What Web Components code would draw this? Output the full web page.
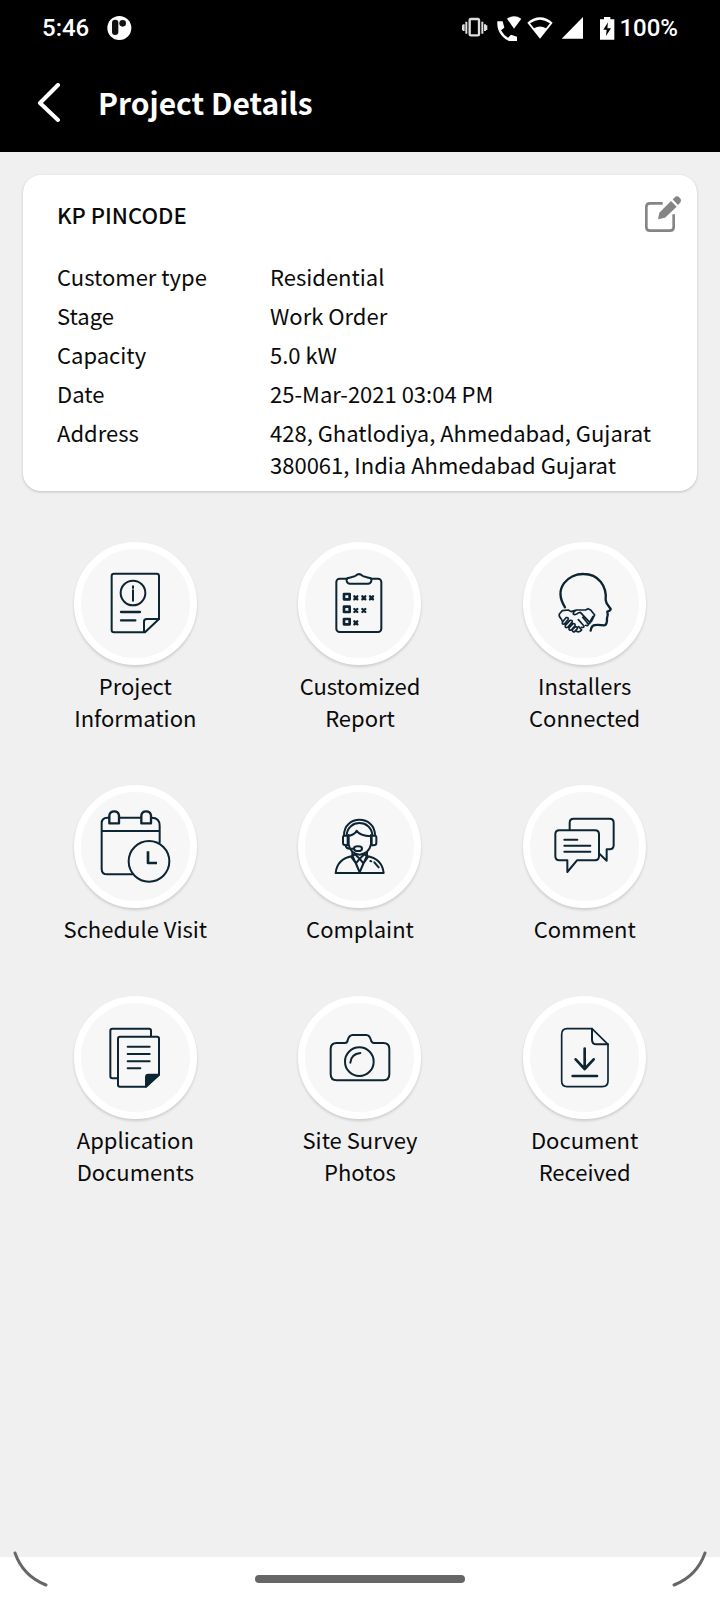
<!DOCTYPE html>
<html lang="en">
<head>
<meta charset="utf-8">
<meta name="viewport" content="width=device-width, initial-scale=1">
<title>Project Details</title>
<style>
    body {
        margin: 0;
        background: #f0f0f0;
        color: #0a0a0a;
        font: 22px/32px "Noto Sans CJK SC", "Noto Sans", sans-serif;
    }
</style>
</head>
<body>
<project-screen></project-screen>

<script>
class StatusBar extends HTMLElement {

    constructor() {
        super();
        this.attachShadow({mode: "open"})
    }

    connectedCallback() {
        this.shadowRoot.innerHTML = `
            <style>
                :host {
                    display: flex;
                    justify-content: space-between;
                    align-items: center;
                    height: 56px;
                    padding: 0 42px;
                    background: #000;
                    color: #fff;
                    font: 500 24px/28px Roboto, sans-serif;
                }
                div {
                    display: flex;
                    align-items: center;
                }
                .left {
                    gap: 18px;
                }
                .icons {
                    margin-right: 4px;
                }
                svg {
                    display: block;
                    fill: #fff;
                }
            </style>
            <div class="left">
                <span>${this.getAttribute("time")}</span>
                <svg width="25" height="26" viewBox="0 0 75 78">
                    <circle cx="37" cy="39" r="36"/>
                    <rect x="15" y="14" width="19" height="46" rx="9" fill="#111"/>
                    <circle cx="47" cy="25" r="10" fill="#111"/>
                </svg>
            </div>
            <div>
                <svg class="icons" width="153" height="26" viewBox="0 0 459 78">
                    <g fill="none" stroke="#ddd" stroke-width="7">
                        <rect x="23" y="12" width="28" height="49" rx="4"/>
                        <path d="M13 20v36M5 28v20M61 20v36M69 28v20" stroke-width="6"/>
                        <path d="M1 31v14M74 31v14" stroke-width="4"/>
                    </g>
                    <path d="M106 19h16l5 19-10 8q8 15 21 22l9-9 18 6v16q-28 2-45-18-16-18-14-44z"/>
                    <path d="M135 11q21-14 43 0l-22 30z"/>
                    <path d="M196 23q38-32 76 0l-38 48z"/>
                    <path d="M204 25q30-21 60 0l-12 15q-18-11-36 0z" fill="#000"/>
                    <path d="M299 71h64V6z"/>
                    <path d="M414 13h12V6h19v7h12v61h-43z"/>
                    <path d="M438 22l-14 22h10l-2 19 15-23h-11z" fill="#000"/>
                </svg>
                <span>${this.getAttribute("battery")}</span>
            </div>`
    }
}

class AppBar extends HTMLElement {

    constructor() {
        super();
        this.attachShadow({mode: "open"})
    }

    connectedCallback() {
        this.shadowRoot.innerHTML = `
            <style>
                :host {
                    display: flex;
                    align-items: center;
                    gap: 32px;
                    box-sizing: border-box;
                    height: 96px;
                    padding: 0 32px 2px;
                    background: #000;
                    color: #fff;
                }
                button {
                    display: block;
                    padding: 0;
                    border: 0;
                    background: none;
                }
                svg {
                    display: block;
                }
                h1 {
                    margin: 0;
                    padding-bottom: 2px;
                    font-size: 30px;
                    line-height: 44px;
                    font-weight: 700;
                }
            </style>
            <button type="button" aria-label="Back">
                <svg width="34" height="40" viewBox="0 0 34 40" fill="none" stroke="#fff" stroke-width="4" stroke-linecap="round" stroke-linejoin="round">
                    <path d="M26 2L8 20l18 17"/>
                </svg>
            </button>
            <h1><slot></slot></h1>`
    }
}

class ProjectCard extends HTMLElement {

    constructor() {
        super();
        this.attachShadow({mode: "open"})
    }

    connectedCallback() {
        this.shadowRoot.innerHTML = `
            <style>
                :host {
                    display: block;
                    padding: 21px 16px 11px 34px;
                    border-radius: 18px;
                    background: #fff;
                    box-shadow: 0 1px 3px rgba(0, 0, 0, 0.2);
                }
                header {
                    display: flex;
                    justify-content: space-between;
                    align-items: center;
                    margin-bottom: 28px;
                }
                h2 {
                    margin: 0;
                    font-size: 22px;
                    line-height: 32px;
                    font-weight: 500;
                }
                button {
                    padding: 0;
                    border: 0;
                    background: none;
                }
                svg {
                    display: block;
                }
                ::slotted(dl) {
                    display: grid;
                    grid-template-columns: 213px 1fr;
                    gap: 7px 0;
                    margin: 0;
                }
            </style>
            <header>
                <h2>${this.getAttribute("name")}</h2>
                <button type="button" aria-label="Edit project">
                    <svg width="36" height="36" viewBox="0 0 108 108">
                        <path d="M53 22H15q-11 0-11 11v60q0 11 11 11h60q11 0 11-11V55" fill="none" stroke="#858585" stroke-width="8"/>
                        <path d="M39 70l4-20 35-35 17 17-35 33zM83 10l5-5q8-8 16 0t0 17l-5 5z" fill="#858585"/>
                    </svg>
                </button>
            </header>
            <slot></slot>`
    }
}

// Line icons, drawn on the 369 unit square that fills the round button
const ICONS = {
    info: `
        <path d="M120 95h128q7 0 7 7v129l-42 40h-93q-7 0-7-7V102q0-7 7-7z"/>
        <path d="M210 270v-31q0-8 8-8h37"/>
        <circle cx="177" cy="153" r="37"/>
        <path d="M177 145v31M177 133v5"/>
        <path d="M141 210h57M141 235h43" stroke-width="7"/>`,
    report: `
        <rect x="115" y="110" width="135" height="160" rx="10"/>
        <path d="M150 108q8-1 15-4 5 0 8-3 10-9 20 0 3 3 8 3 7 3 15 4 5 2 4 9-2 8-10 8h-54q-8 0-10-8-1-7 4-9z" fill="#f7f7f7"/>
        <path d="M138 156h17v16h-17zM138 194h17v16h-17zM138 231h17v16h-17z" stroke-width="8"/>
        <path d="M169 163l9 9m0-9l-9 9M193 163l9 9m0-9l-9 9M216 163l9 9m0-9l-9 9M169 201l9 9m0-9l-9 9M193 201l9 9m0-9l-9 9M169 238l9 9m0-9l-9 9" stroke-width="7"/>`,
    installers: `
        <path d="M126 196C89 137 137 95 182 96c44 0 70 36 66 78l3 10 12 17q0 5-10 8 3 11-1 19 1 22-9 22-29-3-34 2-5 4-6 14" stroke-width="7"/>
        <path d="M118 206l18-2 8 5 16-5h28l7-4 8 4 12 15-10 20M118 206l-9 10q-2 8 5 14l5 9M160 204q-11 6-9 12 5 4 13-2l8-3 29 31q0 5-8 2M179 226l17 20q0 7-8 4M166 233l17 19q0 6-8 4" stroke-width="5"/>
        <path d="M119 239l10-12q9-2 6 6l-11 13q-9 2-5-7zM127 250l14-15q9-1 6 6l-13 15q-9 3-7-6zM138 258l12-13q8-1 6 6l-11 13q-8 2-7-6zM148 263l9-9q8 0 6 6l-8 9q-7 3-7-6z" stroke-width="5"/>
        <path d="M160 268q10 4 16-4l-9-10M201 239l9-16" stroke-width="5"/>`,
    schedule: `
        <path d="M104 98h-4q-17 0-17 17v136q0 17 17 17h76M137 98h63M233 98q24 0 24 24v50M83 138h174"/>
        <path d="M106 115V91q2-12 15-12 12 0 14 12v24zM202 115V91q2-12 14-12 13 0 15 12v24z" stroke-width="7"/>
        <circle cx="225" cy="229" r="61"/>
        <path d="M222 199v35h27" stroke-width="8" stroke-linecap="butt"/>`,
    complaint: `
        <path d="M138 151c0-62 93-62 93 0M146 151c2-49 75-49 77 0M144 152h-5q-4 0-4 4v18q0 7 9 7h5v-29zM226 152h5q4 0 4 4v18q0 7-9 7h-5v-29z"/>
        <path d="M152 153q20-5 24-16 9 15 43 17M152 150v28q5 28 33 31 28-3 34-31v-28M143 181q1 10 13 10h12"/>
        <ellipse cx="180" cy="191" rx="12" ry="7"/>
        <path d="M163 202v11q-46 9-50 51h144q-4-42-50-51v-11M163 211l22 51 22-51M185 221l-15-14-9 10 13 18zM185 221l15-14 9 10-13 18zM185 221l-11 14 11 27 11-27z"/>
        <path d="M229 232l13 15M217 228l3 1"/>`,
    comment: `
        <path d="M162 226h54q12 0 12-12v-66q0-12-12-12H109q-12 0-12 12v66q0 12 12 12h24v35z"/>
        <path d="M140 134v-21q0-12 12-12h108q12 0 12 12v68q0 12-12 12h-9v34l-21-20"/>
        <path d="M124 164h39M124 182h78M124 200h78"/>`,
    documents: `
        <path d="M132 247h-17q-6 0-6-6V104q0-6 6-6h110q6 0 6 6v17"/>
        <path d="M138 122h111q6 0 6 6v108l-40 36h-77q-6 0-6-6V128q0-6 6-6z"/>
        <path d="M216 272v-29q0-7 7-7h32z" fill="#0d2432"/>
        <path d="M161 152h66M161 174h66M161 196h66M161 217h38"/>`,
    photos: `
        <path d="M116 141h24q8 0 9-8 4-16 15-16h41q10 0 14 16 2 8 9 8h28q18 0 18 18v76q0 18-18 18H116q-18 0-18-18v-76q0-18 18-18z"/>
        <circle cx="184" cy="197" r="43"/>
        <path d="M157 200q2-26 30-29"/>`,
    received: `
        <path d="M132 98h75l48 47v110q0 17-17 17H132q-16 0-16-17V115q0-17 16-17z" stroke-width="5"/>
        <path d="M207 98v33q0 14 14 14h34"/>
        <path d="M185 158v60M158 190l27 29 27-29M149 240h73" stroke-width="8"/>`
};

class ProjectAction extends HTMLElement {

    constructor() {
        super();
        this.attachShadow({mode: "open"})
    }

    connectedCallback() {
        this.shadowRoot.innerHTML = `
            <style>
                :host {
                    display: block;
                }
                button {
                    display: flex;
                    flex-direction: column;
                    align-items: center;
                    gap: 4px;
                    width: 100%;
                    padding: 0;
                    border: 0;
                    background: none;
                    color: inherit;
                    font: inherit;
                }
                .circle {
                    box-sizing: border-box;
                    width: 123px;
                    height: 123px;
                    border: 7px solid #fff;
                    border-radius: 50%;
                    background: #f7f7f7;
                    box-shadow: 0 2px 3px rgba(0, 0, 0, 0.15);
                }
                svg {
                    display: block;
                    margin: -7px;
                    fill: none;
                    stroke: #0d2432;
                    stroke-width: 6;
                    stroke-linecap: round;
                    stroke-linejoin: round;
                }
                .label {
                    max-width: 150px;
                }
            </style>
            <button type="button">
                <span class="circle">
                    <svg width="123" height="123" viewBox="0 0 369 369">${ICONS[this.getAttribute("icon")]}</svg>
                </span>
                <span class="label"><slot></slot></span>
            </button>`
    }
}

class GestureBar extends HTMLElement {

    constructor() {
        super();
        this.attachShadow({mode: "open"})
    }

    connectedCallback() {
        this.shadowRoot.innerHTML = `
            <style>
                :host {
                    display: flex;
                    justify-content: space-between;
                    height: 43px;
                    padding: 0 12px;
                    background: #fff;
                }
                svg {
                    display: block;
                    overflow: visible;
                    fill: none;
                    stroke: #666;
                    stroke-width: 3;
                    stroke-linecap: round;
                }
                span {
                    align-self: center;
                    width: 210px;
                    height: 8px;
                    border-radius: 4px;
                    background: #666;
                }
            </style>
            <svg width="36" height="43" viewBox="0 0 36 43"><path d="M3-4Q11 19 34 28"/></svg>
            <span></span>
            <svg width="36" height="43" viewBox="0 0 36 43"><path d="M33-4Q25 19 2 28"/></svg>`
    }
}

class ProjectScreen extends HTMLElement {

    constructor() {
        super();
        this.attachShadow({mode: "open"})
    }

    connectedCallback() {
        this.shadowRoot.innerHTML = `
            <style>
                :host {
                    display: flex;
                    flex-direction: column;
                    min-height: 100vh;
                }
                main {
                    flex: 1;
                    padding: 23px;
                }
                nav {
                    display: grid;
                    grid-template-columns: repeat(3, 1fr);
                    gap: 52px 0;
                    margin-top: 51px;
                }
                dd {
                    margin: 0;
                }
            </style>
            <status-bar time="5:46" battery="100%"></status-bar>
            <app-bar>Project Details</app-bar>
            <main>
                <project-card name="KP PINCODE">
                    <dl>
                        <dt>Customer type</dt>
                        <dd>Residential</dd>
                        <dt>Stage</dt>
                        <dd>Work Order</dd>
                        <dt>Capacity</dt>
                        <dd>5.0 kW</dd>
                        <dt>Date</dt>
                        <dd>25-Mar-2021 03:04 PM</dd>
                        <dt>Address</dt>
                        <dd>428, Ghatlodiya, Ahmedabad, Gujarat 380061, India Ahmedabad Gujarat</dd>
                    </dl>
                </project-card>
                <nav aria-label="Project sections">
                    <project-action icon="info">Project Information</project-action>
                    <project-action icon="report">Customized Report</project-action>
                    <project-action icon="installers">Installers Connected</project-action>
                    <project-action icon="schedule">Schedule Visit</project-action>
                    <project-action icon="complaint">Complaint</project-action>
                    <project-action icon="comment">Comment</project-action>
                    <project-action icon="documents">Application Documents</project-action>
                    <project-action icon="photos">Site Survey Photos</project-action>
                    <project-action icon="received">Document Received</project-action>
                </nav>
            </main>
            <gesture-bar></gesture-bar>`
    }
}

customElements.define('status-bar', StatusBar);
customElements.define('app-bar', AppBar);
customElements.define('project-card', ProjectCard);
customElements.define('project-action', ProjectAction);
customElements.define('gesture-bar', GestureBar);
customElements.define('project-screen', ProjectScreen);
</script>
</body>
</html>
